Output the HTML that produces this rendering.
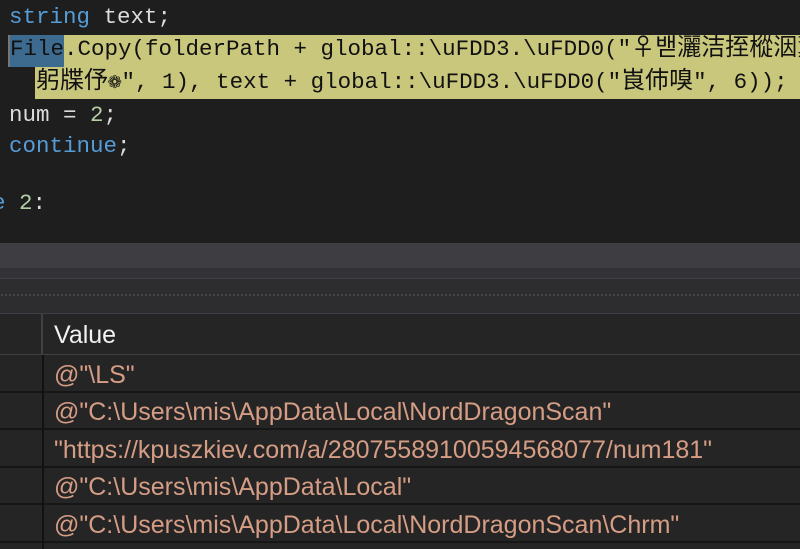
<!DOCTYPE html>
<html><head><meta charset="utf-8"><style>
html,body{margin:0;width:800px;height:549px;overflow:hidden;background:#1e1e1e}
body{position:relative}
.code{position:absolute;left:0;top:0;width:800px;height:243px;background:#1e1e1e;font-family:"Liberation Mono","Noto Sans CJK SC",monospace;font-size:22.5px;color:#dcdcdc;white-space:pre;overflow:hidden}
.ln{position:absolute;height:32px;line-height:32px}
.kw{color:#569cd6}.num{color:#b5cea8}
.cj{font-family:"Noto Sans CJK SC",sans-serif;font-size:24px;line-height:20px}
.hl{position:absolute;background:#c9c77c;color:#111}
.sel{position:absolute;left:8px;top:35px;width:54px;height:32px;background:#3d6b8f;border-left:2px solid #777}
.b1{position:absolute;top:243px;left:0;width:800px;height:25px;background:#3e3e42}
.b2{position:absolute;top:268px;left:0;width:800px;height:10px;background:#333337}
.b3{position:absolute;top:278px;left:0;width:800px;height:35px;background:#2d2d30;border-top:1px solid #3f3f46;box-sizing:border-box}
.dots{position:absolute;top:293px;left:0;width:800px;height:5px;background-image:radial-gradient(#46464a 40%,transparent 45%);background-size:4px 4px}
.hdr{position:absolute;top:313px;left:0;width:800px;height:42px;background:#252526;border-top:1px solid #3f3f46;border-bottom:1px solid #3f3f46;box-sizing:border-box}
.hsep{position:absolute;left:41px;top:313px;width:2px;height:42px;background:#3f3f46}
.row{position:absolute;left:0;width:800px;height:37.5px;background:#252526;border-bottom:2px solid #161616;box-sizing:border-box}
.rsep{position:absolute;left:42px;top:355px;width:2px;height:194px;background:#111}
.t{position:absolute;left:54px;font-family:"Liberation Sans",sans-serif;font-size:25px;line-height:28px;color:#d69d85;white-space:pre}
</style></head><body>
<div class="code">
<div class="ln" style="left:9px;top:1px"><span class="kw">string</span> text;</div>
<div class="hl" style="left:8px;top:35px;width:792px;height:32px"></div>
<div class="hl" style="left:35px;top:67px;width:765px;height:32px"></div>
<div class="sel"></div>
<div class="ln" style="left:10px;top:33px;color:#111">File.Copy(folderPath + global::\uFDD3.\uFDD0("<span class="cj">♀밷灑洁挃樅洇薫</span></div>
<div class="ln" style="left:36px;top:66px;color:#111"><span class="cj">躬牒伃</span>❁", 1), text + global::\uFDD3.\uFDD0("<span class="cj">崀伂嗅</span>", 6));</div>
<div class="ln" style="left:9px;top:99px">num = <span class="num">2</span>;</div>
<div class="ln" style="left:9px;top:130px"><span class="kw">continue</span>;</div>
<div class="ln" style="left:-8px;top:187px"><span class="kw">e</span> <span class="num">2</span>:</div>
</div>
<div class="b1"></div><div class="b2"></div><div class="b3"></div><div class="dots"></div>
<div class="hdr"></div><div class="hsep"></div>
<div class="t" style="top:321px;color:#f1f1f1">Value</div>
<div class="row" style="top:355px"></div>
<div class="row" style="top:392.5px"></div>
<div class="row" style="top:430px"></div>
<div class="row" style="top:467.5px"></div>
<div class="row" style="top:505px"></div>
<div class="row" style="top:542.5px;height:6.5px;border:none"></div>
<div class="rsep"></div>
<div class="t" style="top:361px">@"\LS"</div>
<div class="t" style="top:398px">@"C:\Users\mis\AppData\Local\NordDragonScan"</div>
<div class="t" style="top:436px">"https://kpuszkiev.com/a/28075589100594568077/num181"</div>
<div class="t" style="top:473px">@"C:\Users\mis\AppData\Local"</div>
<div class="t" style="top:511px">@"C:\Users\mis\AppData\Local\NordDragonScan\Chrm"</div>
</body></html>
